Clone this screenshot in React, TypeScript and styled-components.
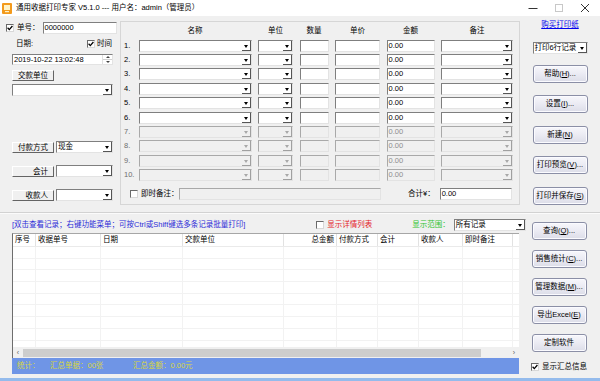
import React from 'react';
import styled, { createGlobalStyle } from 'styled-components';

const GlobalStyle = createGlobalStyle`
  html, body { margin: 0; padding: 0; background: #fff; }
  body {
    font-family: "Liberation Sans", "Noto Sans CJK SC", sans-serif;
    font-size: 7.5px;
    color: #000;
  }
  * { box-sizing: border-box; }
`;

const Window = styled.div`
  width: 600px;
  height: 381px;
  background: #f0f0f0;
  display: flex;
  flex-direction: column;
  border-bottom: 3px solid #94bbec;
  overflow: hidden;
`;

/* title bar */
const TitleBar = styled.div`
  height: 16px;
  flex: none;
  background: #fff;
  display: flex;
  align-items: center;
  padding-left: 2px;
`;

const TitleText = styled.span`
  margin-left: 4px;
  line-height: 10px;
  white-space: nowrap;
`;

const WinControls = styled.div`
  margin-left: auto;
  margin-right: 2px;
  display: flex;
  height: 100%;
`;

const WinBtn = styled.div`
  width: 26px;
  height: 100%;
  display: flex;
  align-items: center;
  justify-content: center;
`;

/* top part */
const TopRow = styled.div`
  display: flex;
  height: 196px;
  flex: none;
`;

const LeftPanel = styled.div`
  width: 113px;
  padding-left: 6px;
  display: flex;
  flex-direction: column;
`;

const FieldRow = styled.div<{ $mt: number; $h?: number }>`
  display: flex;
  align-items: center;
  margin-top: ${p => p.$mt}px;
  height: ${p => p.$h ?? 12}px;
`;

const Label = styled.span<{ $ml?: number; $w?: number; $color?: string }>`
  margin-left: ${p => p.$ml ?? 0}px;
  ${p => (p.$w ? `width: ${p.$w}px; flex: none;` : '')}
  color: ${p => p.$color ?? '#000'};
  line-height: 10px;
  white-space: nowrap;
`;

const TextBox = styled.div<{ $w: number; $ml?: number; $disabled?: boolean; $h?: number }>`
  width: ${p => p.$w}px;
  height: ${p => p.$h ?? 12}px;
  margin-left: ${p => p.$ml ?? 0}px;
  flex: none;
  background: ${p => (p.$disabled ? '#f0f0f0' : '#fff')};
  border-top: 1px solid ${p => (p.$disabled ? '#a9a9a9' : '#7f7f7f')};
  border-left: 1px solid ${p => (p.$disabled ? '#a9a9a9' : '#7f7f7f')};
  border-right: 1px solid #e3e3e3;
  border-bottom: 1px solid #e3e3e3;
  color: ${p => (p.$disabled ? '#8d8d8d' : '#000')};
  display: flex;
  align-items: center;
  padding-left: 1px;
  line-height: 10px;
  white-space: nowrap;
  overflow: hidden;
`;

const DropBtn = styled.span<{ $disabled?: boolean }>`
  margin-left: auto;
  width: 9px;
  height: 100%;
  flex: none;
  position: relative;
  box-shadow: inset -1px -1px 0 ${p => (p.$disabled ? '#a0a0a0' : '#555')};
  &::after {
    content: '';
    position: absolute;
    left: 2px;
    top: 4px;
    border-left: 2.5px solid transparent;
    border-right: 2.5px solid transparent;
    border-top: 3px solid ${p => (p.$disabled ? '#a8a8a8' : '#000')};
  }
`;

const Spinner = styled.span`
  margin-left: auto;
  width: 10px;
  height: 100%;
  flex: none;
  display: flex;
  flex-direction: column;
  border-left: 1px solid #e0e0e0;
`;

const SpinHalf = styled.span<{ $up?: boolean }>`
  flex: 1;
  position: relative;
  &::after {
    content: '';
    position: absolute;
    left: 2.5px;
    top: ${p => (p.$up ? 1 : 1)}px;
    border-left: 2px solid transparent;
    border-right: 2px solid transparent;
    ${p => (p.$up ? 'border-bottom: 2px solid #444;' : 'border-top: 2px solid #444;')}
  }
  & + & { border-top: 1px solid #d0d0d0; }
`;

const FlatButton = styled.div<{ $ml?: number }>`
  width: 42px;
  height: 11px;
  flex: none;
  margin-left: ${p => p.$ml ?? 0}px;
  background: #f0f0f0;
  border-top: 1px solid #fff;
  border-left: 1px solid #fff;
  border-right: 1px solid #646464;
  border-bottom: 1px solid #646464;
  display: flex;
  align-items: center;
  justify-content: flex-end;
  padding-right: 5px;
  line-height: 9px;
  white-space: nowrap;
`;

const CheckBox = styled.span<{ $ml?: number }>`
  width: 8px;
  height: 8px;
  flex: none;
  margin-left: ${p => p.$ml ?? 0}px;
  background: #fff;
  border-top: 1px solid #6a6a6a;
  border-left: 1px solid #6a6a6a;
  border-right: 1px solid #d8d8d8;
  border-bottom: 1px solid #d8d8d8;
  display: flex;
  align-items: center;
  justify-content: center;
`;

/* items group */
const GroupBox = styled.div`
  width: 400px;
  height: 184px;
  margin-left: 7px;
  margin-top: 5px;
  border: 1px solid #d6d6d6;
  padding: 2px 0 0 1px;
`;

const ItemGrid = styled.div`
  display: grid;
  grid-template-columns: 10px 113px 35px 29px 45px 48px 72px;
  grid-template-rows: 14.5px repeat(10, 14.4px);
  column-gap: 6.5px;
  align-items: center;
`;

const HeadCell = styled.div`
  text-align: center;
  line-height: 10px;
`;

const RowNum = styled.div<{ $disabled?: boolean }>`
  padding-left: 2px;
  line-height: 10px;
  color: ${p => (p.$disabled ? '#6d6d6d' : '#000')};
  white-space: nowrap;
`;

const MemoRow = styled.div`
  display: flex;
  align-items: center;
  height: 12px;
  margin-top: 5.5px;
  padding-left: 8px;
  padding-right: 6px;
`;

/* side column */
const SideColumn = styled.div<{ $pt: number; $gap: number }>`
  width: 80px;
  flex: none;
  display: flex;
  flex-direction: column;
  align-items: center;
  padding-top: ${p => p.$pt}px;
  gap: ${p => p.$gap}px;
`;

const BuyLink = styled.a`
  color: #0000ee;
  text-decoration: underline;
  line-height: 10px;
  height: 10px;
  margin-bottom: -1px;
`;

const SideButton = styled.div<{ $mt?: number }>`
  width: 55px;
  height: 18px;
  flex: none;
  margin-top: ${p => p.$mt ?? 0}px;
  border: 1px solid #8b8fa6;
  border-radius: 3px;
  background: linear-gradient(#f7f7fb 0%, #ececf4 45%, #dcdde8 100%);
  box-shadow: inset 0 0 0 1px #fbfbff;
  display: flex;
  align-items: center;
  justify-content: center;
  line-height: 10px;
  white-space: nowrap;
`;

const Divider = styled.div`
  height: 2px;
  flex: none;
  border-top: 1px solid #d2d2d2;
  border-bottom: 1px solid #fbfbfb;
`;

/* bottom part */
const BottomRow = styled.div`
  display: flex;
  flex: 1;
`;

const MainArea = styled.div`
  width: 519px;
  flex: none;
  padding-left: 12px;
  display: flex;
  flex-direction: column;
`;

const ToolRow = styled.div`
  display: flex;
  align-items: center;
  height: 13px;
  margin-top: 4px;
  padding-right: 7px;
`;

const ListView = styled.div`
  margin-top: 2px;
  height: 125px;
  background: #fff;
  border-top: 1px solid #a6a6a6;
  border-left: 1px solid #6e6e6e;
  display: flex;
  flex-direction: column;
  overflow: hidden;
`;

const ListHead = styled.div`
  display: flex;
  height: 13px;
  flex: none;
  border-bottom: 1px solid #eaeaea;
`;

const ListBody = styled.div`
  flex: 1;
  overflow: hidden;
`;

const ListRow = styled.div`
  display: flex;
  height: 11.7px;
  border-bottom: 1px solid #f2f2f2;
`;

const Cell = styled.div<{ $w: number; $right?: boolean; $head?: boolean }>`
  width: ${p => p.$w}px;
  flex: none;
  border-right: 1px solid ${p => (p.$head ? '#e2e2e2' : '#f2f2f2')};
  padding: 0 2px;
  text-align: ${p => (p.$right ? 'right' : 'left')};
  line-height: 12px;
  white-space: nowrap;
  overflow: hidden;
`;

const HScroll = styled.div`
  height: 11px;
  flex: none;
  display: flex;
  align-items: center;
  background: #f0f0f0;
`;

const ScrollArrow = styled.span`
  width: 10px;
  flex: none;
  text-align: center;
  font-size: 7px;
  line-height: 10px;
  color: #606060;
`;

const ScrollThumb = styled.span`
  width: 458px;
  height: 8px;
  flex: none;
  background: #cdcdcd;
`;

const StatusBar = styled.div`
  height: 16px;
  flex: none;
  background: #6f95e6;
  display: flex;
  align-items: center;
  padding-left: 5px;
  color: #d8d63c;
`;

const StatusItem = styled.span<{ $w?: number }>`
  ${p => (p.$w ? `width: ${p.$w}px;` : '')}
  flex: none;
  line-height: 10px;
  white-space: nowrap;
`;

const Check = ({ checked, ml }: { checked?: boolean; ml?: number }) => (
  <CheckBox $ml={ml}>
    {checked && (
      <svg width="6" height="6" viewBox="0 0 6 6">
        <path d="M0.6 2.8 L2.3 4.6 L5.4 1" fill="none" stroke="#000" strokeWidth="1.3" />
      </svg>
    )}
  </CheckBox>
);

const Combo = ({ w, text, ml, disabled }: { w: number; text?: string; ml?: number; disabled?: boolean }) => (
  <TextBox $w={w} $ml={ml} $disabled={disabled}>
    {text}
    <DropBtn $disabled={disabled} />
  </TextBox>
);

const listCols = [
  { title: '序号', w: 23 },
  { title: '收据单号', w: 65 },
  { title: '日期', w: 82 },
  { title: '交款单位', w: 101 },
  { title: '总金额', w: 53, right: true },
  { title: '付款方式', w: 41 },
  { title: '会计', w: 41 },
  { title: '收款人', w: 44 },
  { title: '即时备注', w: 50 },
];

const itemRows = Array.from({ length: 10 }, (_, i) => i + 1);

export default function App() {
  return (
    <>
      <GlobalStyle />
      <Window>
        <TitleBar>
          <svg width="10" height="11" viewBox="0 0 10 11">
            <rect x="0" y="0" width="10" height="11" rx="1" fill="#f39a1c" />
            <rect x="2" y="2" width="6" height="5" fill="#fff3c8" />
            <rect x="3" y="8" width="4" height="1.2" fill="#fff3c8" />
          </svg>
          <TitleText>通用收据打印专家 V5.1.0 --- 用户名：admin（管理员）</TitleText>
          <WinControls>
            <WinBtn>
              <svg width="10" height="10" viewBox="0 0 10 10">
                <line x1="0.5" y1="5.5" x2="9.5" y2="5.5" stroke="#333" strokeWidth="1" />
              </svg>
            </WinBtn>
            <WinBtn>
              <svg width="10" height="10" viewBox="0 0 10 10">
                <rect x="1.5" y="1.5" width="7" height="7" fill="none" stroke="#c8c8c8" strokeWidth="1" />
              </svg>
            </WinBtn>
            <WinBtn>
              <svg width="10" height="10" viewBox="0 0 10 10">
                <path d="M1 1 L9 9 M9 1 L1 9" stroke="#333" strokeWidth="1" />
              </svg>
            </WinBtn>
          </WinControls>
        </TitleBar>

        <TopRow>
          <LeftPanel>
            <FieldRow $mt={6}>
              <Check checked />
              <Label $ml={3}>单号：</Label>
              <TextBox $w={74} $ml={3}>0000000</TextBox>
            </FieldRow>
            <FieldRow $mt={5} $h={9}>
              <Label $ml={10}>日期:</Label>
              <Check checked ml={54} />
              <Label $ml={2}>时间</Label>
            </FieldRow>
            <FieldRow $mt={6} $h={11}>
              <TextBox $w={101} $ml={6} $h={11}>
                2019-10-22 13:02:48
                <Spinner>
                  <SpinHalf $up />
                  <SpinHalf />
                </Spinner>
              </TextBox>
            </FieldRow>
            <FieldRow $mt={5} $h={11}>
              <FlatButton $ml={6}>交款单位</FlatButton>
            </FieldRow>
            <FieldRow $mt={3}>
              <Combo w={101} ml={6} />
            </FieldRow>
            <FieldRow $mt={45}>
              <FlatButton $ml={6}>付款方式</FlatButton>
              <Combo w={57} ml={2} text="现金" />
            </FieldRow>
            <FieldRow $mt={12}>
              <FlatButton $ml={6}>会计</FlatButton>
              <Combo w={57} ml={2} />
            </FieldRow>
            <FieldRow $mt={12}>
              <FlatButton $ml={6}>收款人</FlatButton>
              <Combo w={57} ml={2} />
            </FieldRow>
          </LeftPanel>

          <GroupBox>
            <ItemGrid>
              <span />
              <HeadCell>名称</HeadCell>
              <HeadCell>单位</HeadCell>
              <HeadCell>数量</HeadCell>
              <HeadCell>单价</HeadCell>
              <HeadCell>金额</HeadCell>
              <HeadCell>备注</HeadCell>
              {itemRows.map(n => {
                const off = n > 6;
                return (
                  <React.Fragment key={n}>
                    <RowNum $disabled={off}>{n}.</RowNum>
                    <Combo w={113} disabled={off} />
                    <Combo w={35} disabled={off} />
                    <TextBox $w={29} $disabled={off} />
                    <TextBox $w={45} $disabled={off} />
                    <TextBox $w={48} $disabled={off}>0.00</TextBox>
                    <Combo w={72} disabled={off} />
                  </React.Fragment>
                );
              })}
            </ItemGrid>
            <MemoRow>
              <Check />
              <Label $ml={3} $w={38}>即时备注：</Label>
              <TextBox $w={202} $disabled />
              <Label $ml={27}>合计¥：</Label>
              <TextBox $w={72} $ml={5}>0.00</TextBox>
            </MemoRow>
          </GroupBox>

          <SideColumn $pt={4} $gap={12.5}>
            <BuyLink>购买打印纸</BuyLink>
            <Combo w={55} text="打印6行记录" />
            <SideButton $mt={-1.5}>帮助(<u>H</u>)...</SideButton>
            <SideButton>设置(<u>I</u>)...</SideButton>
            <SideButton>新建(<u>N</u>)</SideButton>
            <SideButton>打印预览(<u>V</u>)...</SideButton>
            <SideButton>打印并保存(<u>S</u>)</SideButton>
          </SideColumn>
        </TopRow>

        <Divider />

        <BottomRow>
          <MainArea>
            <ToolRow>
              <Label $color="#2c2cd8">[双击查看记录；右键功能菜单；可按Ctrl或Shift键选多条记录批量打印]</Label>
              <Check ml={71} />
              <Label $ml={3} $color="#e4232a">显示详情列表</Label>
              <Label $ml={40} $color="#2fc42f">显示范围：</Label>
              <Combo w={72} ml={4} text="所有记录" />
            </ToolRow>
            <ListView>
              <ListHead>
                {listCols.map(c => (
                  <Cell key={c.title} $w={c.w} $right={c.right} $head>
                    {c.title}
                  </Cell>
                ))}
              </ListHead>
              <ListBody>
                {Array.from({ length: 9 }, (_, r) => (
                  <ListRow key={r}>
                    {listCols.map(c => (
                      <Cell key={c.title} $w={c.w} />
                    ))}
                  </ListRow>
                ))}
              </ListBody>
              <HScroll>
                <ScrollArrow>&lsaquo;</ScrollArrow>
                <ScrollThumb />
                <ScrollArrow style={{ marginLeft: 'auto' }}>&rsaquo;</ScrollArrow>
              </HScroll>
            </ListView>
            <StatusBar>
              <StatusItem $w={33}>统计：</StatusItem>
              <StatusItem $w={83}>汇总单据：00张</StatusItem>
              <StatusItem>汇总金额：0.00元</StatusItem>
            </StatusBar>
          </MainArea>

          <SideColumn $pt={8} $gap={10}>
            <SideButton>查询(<u>Q</u>)...</SideButton>
            <SideButton>销售统计(<u>C</u>)...</SideButton>
            <SideButton>管理数据(<u>M</u>)...</SideButton>
            <SideButton>导出Excel(<u>E</u>)</SideButton>
            <SideButton>定制软件</SideButton>
            <FieldRow $mt={1} $h={8}>
              <Check checked />
              <Label $ml={3}>显示汇总信息</Label>
            </FieldRow>
          </SideColumn>
        </BottomRow>
      </Window>
    </>
  );
}
